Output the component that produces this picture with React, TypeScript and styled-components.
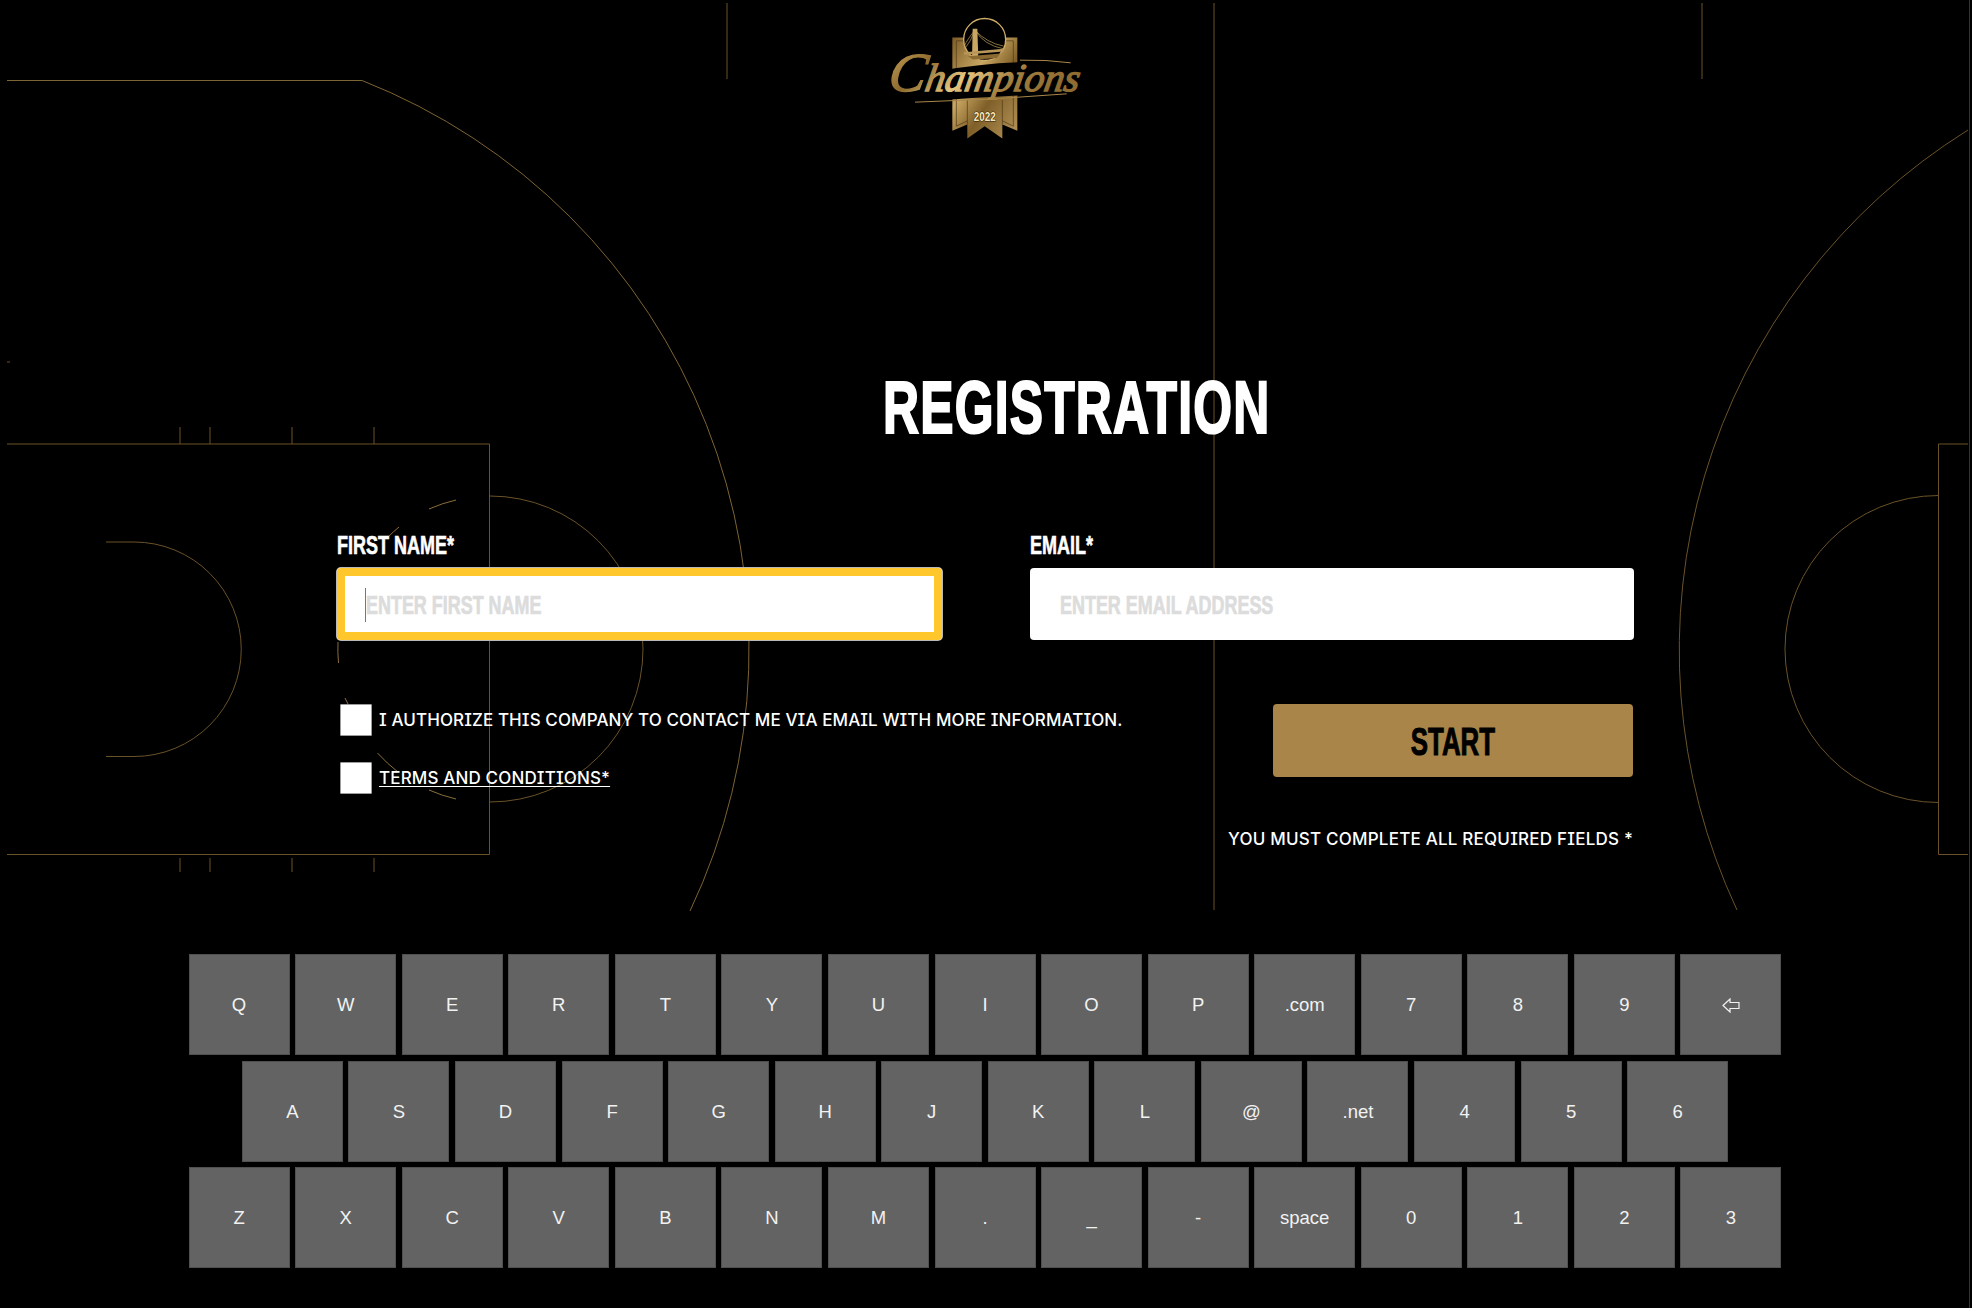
import React from 'react';
import styled, { createGlobalStyle } from 'styled-components';

const GlobalStyle = createGlobalStyle`
  html, body {
    margin: 0;
    padding: 0;
    background: #000;
  }
`;

const Page = styled.div`
  position: relative;
  width: 1969px;
  height: 1308px;
  background: #000;
  border-right: 1px solid #333;
  overflow: hidden;
  font-family: 'Liberation Sans', Arial, sans-serif;
`;

const Court = styled.svg`
  position: absolute;
  left: 0;
  top: 0;
  pointer-events: none;
`;

const Content = styled.main`
  position: relative;
  display: flex;
  flex-direction: column;
`;

const LogoWrap = styled.header`
  display: flex;
  justify-content: center;
  height: 127px;
  padding-top: 15px;
`;

const Title = styled.h1`
  margin: 225px 0 0 883px;
  height: 80px;
  font-size: 75px;
  line-height: 80px;
  font-weight: 700;
  letter-spacing: 1.8px;
  color: #fff;
  white-space: nowrap;
  transform: scaleX(0.665);
  transform-origin: left center;
  -webkit-text-stroke: 2.2px #fff;
`;

const Fields = styled.section`
  display: grid;
  grid-template-columns: 605px 604px;
  column-gap: 88px;
  margin: 86px 0 0 337px;
`;

const FieldGroup = styled.div`
  display: flex;
  flex-direction: column;
`;

const Label = styled.label`
  display: block;
  height: 24px;
  margin-bottom: 11px;
  font-size: 25px;
  line-height: 24px;
  font-weight: 700;
  color: #fff;
  white-space: nowrap;
  transform: scaleX(0.72);
  transform-origin: left center;
  -webkit-text-stroke: 0.6px #fff;
`;

const Field = styled.div<{ $focused?: boolean }>`
  display: flex;
  align-items: center;
  height: 72px;
  padding: 2px 0 0 ${p => (p.$focused ? 28 : 30)}px;
  box-sizing: border-box;
  background: #fff;
  border-radius: 4px;
  box-shadow: ${p => (p.$focused ? 'inset 0 0 0 8px #ffc72c, 0 0 0 1px #b9b9b9' : 'none')};
`;

const Caret = styled.span`
  flex: none;
  width: 1px;
  height: 34px;
  background: #777;
`;

const Placeholder = styled.span<{ $scale: number }>`
  font-size: 26px;
  font-weight: 700;
  color: #dcdcdc;
  white-space: nowrap;
  transform: scaleX(${p => p.$scale});
  transform-origin: left center;
  -webkit-text-stroke: 0.7px #dcdcdc;
`;

const Lower = styled.section`
  display: grid;
  grid-template-columns: 936px 360px;
  margin: 64px 0 0 337px;
`;

const Options = styled.div`
  display: flex;
  flex-direction: column;
  gap: 26px;
  padding-left: 3px;
`;

const OptionRow = styled.div`
  display: flex;
  align-items: center;
  gap: 7px;
  height: 32px;
`;

const Box = styled.span`
  flex: none;
  width: 32px;
  height: 32px;
  box-sizing: border-box;
  background: #fff;
  border: 1px solid #9c9c9c;
  border-radius: 1px;
`;

const OptionText = styled.span`
  font-family: Inter, 'Liberation Sans', sans-serif;
  font-feature-settings: 'cv08';
  font-size: 17px;
  font-weight: 500;
  letter-spacing: 0.1px;
  color: #fff;
  white-space: nowrap;
`;

const TermsLink = styled(OptionText).attrs({ as: 'a' })`
  letter-spacing: 0.15px;
  text-decoration: underline;
  text-underline-offset: 2px;
`;

const Submit = styled.div`
  display: flex;
  flex-direction: column;
  align-items: flex-end;
`;

const StartButton = styled.button`
  display: flex;
  align-items: center;
  justify-content: center;
  width: 360px;
  height: 73px;
  padding: 4px 0 0;
  background: #a98549;
  border: none;
  border-radius: 4px;
  font-family: inherit;
`;

const StartText = styled.span`
  font-size: 38px;
  font-weight: 700;
  color: #000;
  transform: scaleX(0.68);
  -webkit-text-stroke: 1px #000;
`;

const Note = styled.p`
  margin: 52px 0 0;
  font-family: Inter, 'Liberation Sans', sans-serif;
  font-feature-settings: 'cv08';
  font-size: 17px;
  line-height: 20px;
  font-weight: 500;
  letter-spacing: 0.22px;
  color: #fff;
  white-space: nowrap;
`;

const Keyboard = styled.section`
  display: flex;
  flex-direction: column;
  gap: 5.5px;
  margin-top: 105px;
  padding-left: 1px;
`;

const KeyRow = styled.div`
  display: flex;
  justify-content: center;
  gap: 5.57px;
`;

const Key = styled.button`
  display: flex;
  align-items: center;
  justify-content: center;
  flex: none;
  width: 101px;
  height: 101px;
  padding: 1px 0 0;
  box-sizing: border-box;
  background: #636363;
  border: 1px solid #505050;
  color: #f2f2f2;
  font-family: 'Liberation Sans', Arial, sans-serif;
  font-size: 18.5px;
`;

const rows = [
  ['Q', 'W', 'E', 'R', 'T', 'Y', 'U', 'I', 'O', 'P', '.com', '7', '8', '9', 'back'],
  ['A', 'S', 'D', 'F', 'G', 'H', 'J', 'K', 'L', '@', '.net', '4', '5', '6'],
  ['Z', 'X', 'C', 'V', 'B', 'N', 'M', '.', '_', '-', 'space', '0', '1', '2', '3'],
];

function CourtLines() {
  return (
    <Court width="1969" height="930" viewBox="0 0 1969 930" fill="none" stroke="#6a5329" strokeWidth="1">
      {/* left half */}
      <path d="M7 80.5H362A611 611 0 0 1 690 911" stroke="#7d6434" />
      <path d="M7 444H489.5V854.5H7" />
      <path d="M180 427V444M210 427V444M292 427V444M374 427V444" />
      <path d="M180 858V872M210 858V872M292 858V872M374 858V872" />
      <path d="M106 542H134A107 107 0 0 1 134 756.5H106" />
      <path d="M7 362H10" />
      {/* free throw circle, solid half then the dashes */}
      <path d="M490 496A153 153 0 0 1 490 802" />
      <path d="M429 509A153 153 0 0 1 456 500M388 537A153 153 0 0 1 399 527M338 642A153 153 0 0 0 338.500 663M345 698L348 704M377.500 753A153 153 0 0 0 398 772M429 790A153 153 0 0 0 456 799" stroke="#8a6f3a" />
      {/* center and sidelines */}
      <path d="M727 3V79M1214 3V910M1702 3V79" />
      {/* right half */}
      <path d="M1968 130A613 613 0 0 0 1737 910" />
      <path d="M1968 444H1938.500V854.500H1968" />
      <path d="M1938.500 495.500A153.500 153.500 0 0 0 1938.500 802.500" />
    </Court>
  );
}

function BackArrow() {
  return (
    <svg width="18" height="15" viewBox="0 0 18 15" fill="none" stroke="#f2f2f2" strokeWidth="1.200">
      <path d="M1 7.500L8 1V4.500H17V10.500H8V14Z" />
    </svg>
  );
}

function ChampionsLogo() {
  return (
    <svg width="210" height="127" viewBox="120 45 630 380">
      <defs>
        <linearGradient id="goldText" x1="0" y1="0" x2="1" y2="0.25">
          <stop offset="0" stopColor="#c9a35c" />
          <stop offset="0.25" stopColor="#8c6a2e" />
          <stop offset="0.5" stopColor="#e6c67f" />
          <stop offset="0.75" stopColor="#a37f3f" />
          <stop offset="1" stopColor="#8f6d31" />
        </linearGradient>
        <linearGradient id="goldBanner" x1="0" y1="0" x2="1" y2="1">
          <stop offset="0" stopColor="#7c5c26" />
          <stop offset="0.35" stopColor="#c9a662" />
          <stop offset="0.6" stopColor="#7f5f28" />
          <stop offset="1" stopColor="#b8965a" />
        </linearGradient>
      </defs>
      <path d="M337 112H532V392L487 373V415L434 378L382 415V373L337 392Z" fill="url(#goldBanner)" />
      <path d="M349 122H520V378L487 362M349 378V122M349 378L382 362" stroke="#4a3614" strokeWidth="2" fill="none" />
      <path d="M382 373V300M487 373V300" stroke="#4a3614" strokeWidth="2" />
      <path d="M300 212Q500 176 692 188L680 281Q450 286 225 306Z" fill="#000" />
      <path d="M540 180Q620 178 692 188M225 306Q450 300 680 281" stroke="#a8864a" strokeWidth="3" fill="none" />
      <circle cx="434" cy="118" r="63" fill="#000" stroke="#d0ad68" strokeWidth="4" />
      <path d="M398 86H412L415 176H396Z" fill="#c9a662" />
      <path d="M374 146Q392 125 405 90Q432 135 491 146M405 90Q440 128 491 138M405 90Q380 120 374 136" stroke="#c9a662" strokeWidth="2" fill="none" />
      <path d="M372 156L492 146V154L372 164Z" fill="#b8965a" />
      <path d="M384 168L482 160L470 174L398 178Z" fill="#8a6a30" />
      <g transform="translate(38 0) skewX(-10)">
        <text x="150" y="272" fill="url(#goldText)" stroke="url(#goldText)" strokeWidth="4" fontFamily="'Liberation Serif', serif" fontStyle="italic" fontSize="118" textLength="574" lengthAdjust="spacingAndGlyphs">
          <tspan fontSize="165">C</tspan>hampions
        </text>
      </g>
      <text x="434" y="363" textAnchor="middle" fill="#f6e6b8" fontFamily="'Liberation Sans', sans-serif" fontWeight="700" fontSize="40" textLength="66" lengthAdjust="spacingAndGlyphs" stroke="#2e2009" strokeWidth="3" paintOrder="stroke">2022</text>
    </svg>
  );
}

export default function App() {
  return (
    <>
      <GlobalStyle />
      <Page>
        <CourtLines />
        <Content>
          <LogoWrap>
            <ChampionsLogo />
          </LogoWrap>
          <Title>REGISTRATION</Title>
          <Fields>
            <FieldGroup>
              <Label>FIRST NAME*</Label>
              <Field $focused>
                <Caret />
                <Placeholder $scale={0.69}>ENTER FIRST NAME</Placeholder>
              </Field>
            </FieldGroup>
            <FieldGroup>
              <Label>EMAIL*</Label>
              <Field>
                <Placeholder $scale={0.69}>ENTER EMAIL ADDRESS</Placeholder>
              </Field>
            </FieldGroup>
          </Fields>
          <Lower>
            <Options>
              <OptionRow>
                <Box />
                <OptionText>I AUTHORIZE THIS COMPANY TO CONTACT ME VIA EMAIL WITH MORE INFORMATION.</OptionText>
              </OptionRow>
              <OptionRow>
                <Box />
                <TermsLink>TERMS AND CONDITIONS*</TermsLink>
              </OptionRow>
            </Options>
            <Submit>
              <StartButton>
                <StartText>START</StartText>
              </StartButton>
              <Note>YOU MUST COMPLETE ALL REQUIRED FIELDS *</Note>
            </Submit>
          </Lower>
          <Keyboard>
            {rows.map((row, i) => (
              <KeyRow key={i}>
                {row.map(k => (
                  <Key key={k}>{k === 'back' ? <BackArrow /> : k}</Key>
                ))}
              </KeyRow>
            ))}
          </Keyboard>
        </Content>
      </Page>
    </>
  );
}
